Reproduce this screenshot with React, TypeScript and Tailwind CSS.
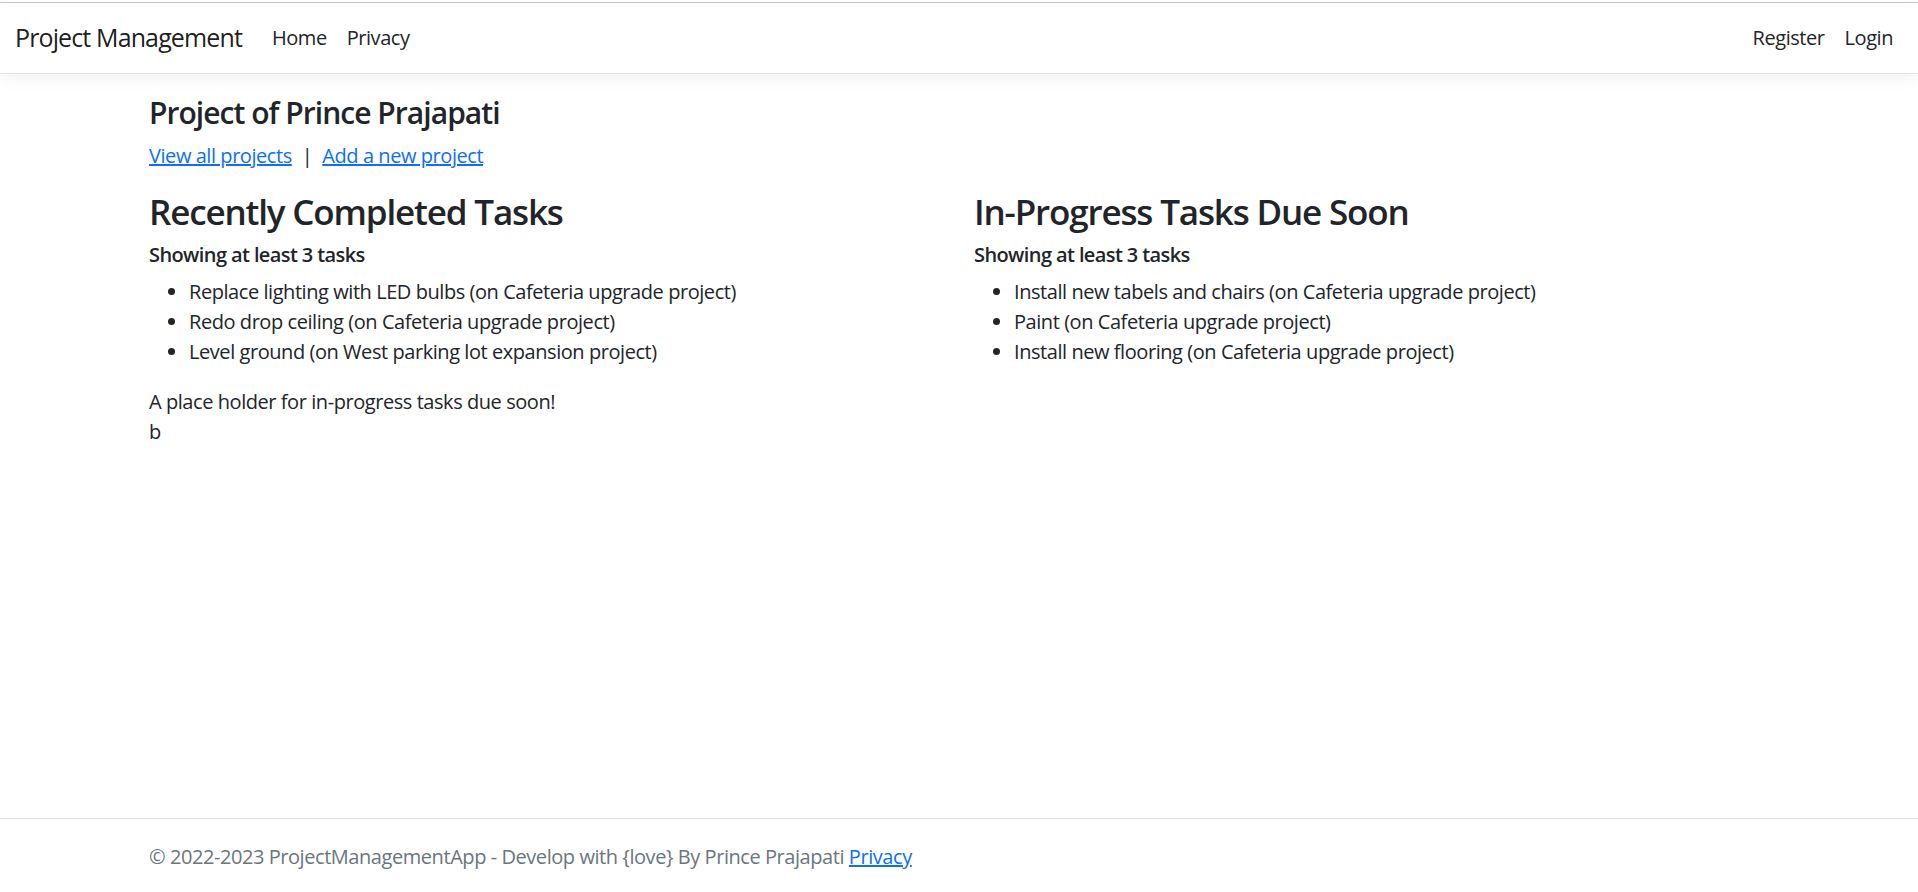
import React from 'react';

const completedTasks = [
  { name: 'Replace lighting with LED bulbs', project: 'Cafeteria upgrade' },
  { name: 'Redo drop ceiling', project: 'Cafeteria upgrade' },
  { name: 'Level ground', project: 'West parking lot expansion' },
];

const dueSoonTasks = [
  { name: 'Install new tabels and chairs', project: 'Cafeteria upgrade' },
  { name: 'Paint', project: 'Cafeteria upgrade' },
  { name: 'Install new flooring', project: 'Cafeteria upgrade' },
];

function TaskList({ tasks }: { tasks: { name: string; project: string }[] }) {
  return (
    <ul className="list-disc pl-[40px] mb-[20px]">
      {tasks.map((t) => (
        <li key={t.name}>
          {t.name} (on {t.project} project)
        </li>
      ))}
    </ul>
  );
}

export default function App() {
  return (
    <div
      className="h-screen flex flex-col bg-white text-[#212529] text-[20px] leading-[1.5] tracking-[-0.022em]"
      style={{ fontFamily: '"Open Sans", "Noto Sans", sans-serif' }}
    >
      {/* Top edge */}
      <div className="h-[2px] bg-white" />
      <div className="h-px bg-[#c6c6c6]" />

      {/* Navbar */}
      <nav className="h-[71px] flex items-center px-[15px] bg-white border-b border-[#dee2e6] shadow-[0_5px_15px_rgba(0,0,0,0.05)] relative z-10">
        <a href="#" className="text-[25px] leading-[1.5] tracking-[-0.035em] text-black/90 mr-[20px] py-[6px]">
          Project Management
        </a>
        <div className="flex items-center">
          <a href="#" className="px-[10px] py-[10px] text-[#212529]">Home</a>
          <a href="#" className="px-[10px] py-[10px] text-[#212529]">Privacy</a>
        </div>
        <div className="ml-auto flex items-center">
          <a href="#" className="px-[10px] py-[10px] text-[#212529]">Register</a>
          <a href="#" className="px-[10px] py-[10px] text-[#212529]">Login</a>
        </div>
      </nav>

      {/* Content */}
      <main className="w-[1650px] mx-auto px-[15px] pt-[21px] pb-[20px]">
        <h4 className="text-[30px] font-semibold leading-[1.2] tracking-[-0.032em] mb-[10px]">
          Project of Prince Prajapati
        </h4>
        <p className="mb-[20px]">
          <a href="#" className="text-[#0d6efd] underline">View all projects</a>
          <span className="mx-[10px]">|</span>
          <a href="#" className="text-[#0d6efd] underline">Add a new project</a>
        </p>

        <div className="grid grid-cols-2 -mx-[15px]">
          <div className="px-[15px]">
            <h3 className="text-[35px] font-semibold leading-[1.2] tracking-[-0.033em] mb-[10px]">
              Recently Completed Tasks
            </h3>
            <h6 className="text-[20px] font-semibold leading-[1.2] tracking-[-0.03em] mb-[10px]">
              Showing at least 3 tasks
            </h6>
            <TaskList tasks={completedTasks} />
            <p>
              A place holder for in-progress tasks due soon!
              <br />
              b
            </p>
          </div>
          <div className="px-[15px]">
            <h3 className="text-[35px] font-semibold leading-[1.2] tracking-[-0.033em] mb-[10px]">
              In-Progress Tasks Due Soon
            </h3>
            <h6 className="text-[20px] font-semibold leading-[1.2] tracking-[-0.03em] mb-[10px]">
              Showing at least 3 tasks
            </h6>
            <TaskList tasks={dueSoonTasks} />
          </div>
        </div>
      </main>

      {/* Footer */}
      <footer className="mt-auto border-t border-[#dee2e6] h-[74px] text-[#6c757d] whitespace-nowrap">
        <div className="w-[1650px] mx-auto px-[15px] leading-[76px]">
          &copy; 2022-2023 ProjectManagementApp - Develop with {'{love}'} By Prince Prajapati{' '}
          <a href="#" className="text-[#0d6efd] underline">Privacy</a>
        </div>
      </footer>
    </div>
  );
}
